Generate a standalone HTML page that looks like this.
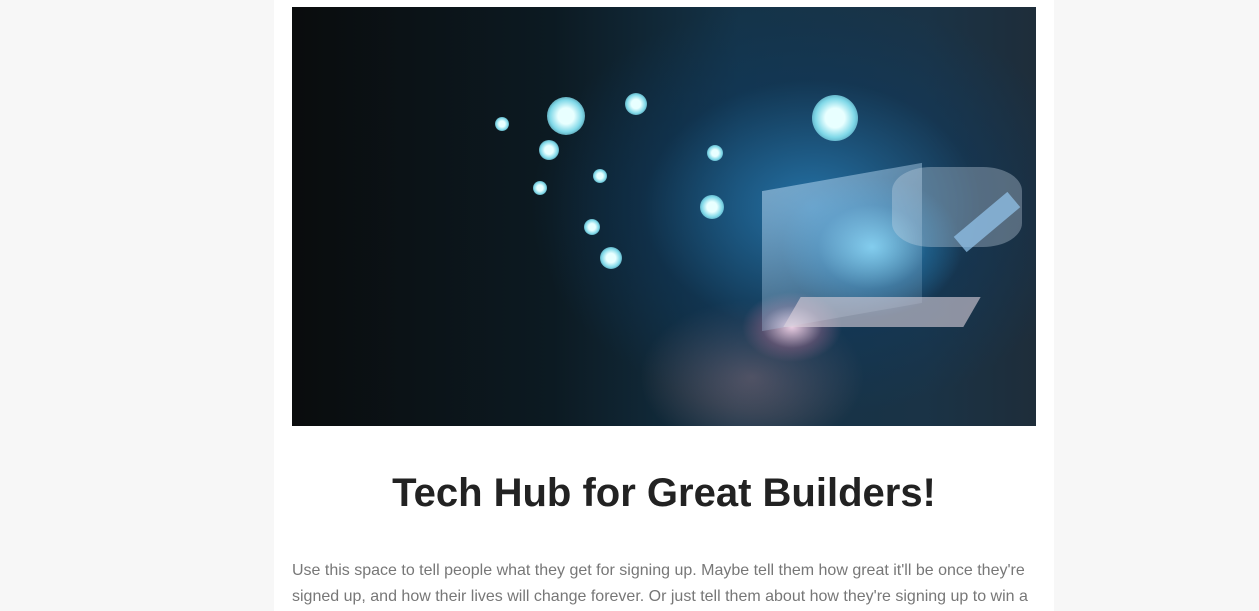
<!DOCTYPE html>
<html><head><style>
body{margin:0;background:#f7f7f7;width:1259px;height:611px;overflow:hidden;font-family:"Liberation Sans",Arial,sans-serif}
.panel{position:absolute;left:274px;top:0;width:780px;height:611px;background:#fff}
.img{position:absolute;left:18px;top:7px;width:744px;height:419px;overflow:hidden;
background:
radial-gradient(ellipse 50px 35px at 500px 320px,rgba(255,220,240,.9),rgba(200,120,160,.3) 60%,transparent),
radial-gradient(ellipse 90px 70px at 580px 240px,rgba(120,220,255,.85),rgba(40,140,200,.35) 60%,transparent),
radial-gradient(ellipse 280px 210px at 520px 200px,rgba(40,130,190,.8),rgba(15,60,100,.4) 60%,transparent),
radial-gradient(ellipse 160px 110px at 460px 370px,rgba(140,110,120,.6),transparent 70%),
linear-gradient(90deg,#0a0c0d 0%,#0c1a22 35%,#143348 60%,#1a3346 85%,#1e2d3a 100%)}
.dot{position:absolute;border-radius:50%;background:radial-gradient(circle,#e8ffff 30%,#7fd8e8 60%,rgba(80,180,210,.2));}
h1{position:absolute;left:0;width:780px;top:470px;margin:0;text-align:center;font-size:40px;font-weight:bold;color:#222;line-height:46px}
p{position:absolute;left:18px;top:558px;width:744px;margin:0;font-size:16px;line-height:26px;color:#777}
</style></head><body>
<div class="panel">
<div class="img">
<div class="dot" style="left:255px;top:90px;width:38px;height:38px"></div>
<div class="dot" style="left:520px;top:88px;width:46px;height:46px"></div>
<div class="dot" style="left:203px;top:110px;width:14px;height:14px"></div>
<div class="dot" style="left:247px;top:133px;width:20px;height:20px"></div>
<div class="dot" style="left:333px;top:86px;width:22px;height:22px"></div>
<div class="dot" style="left:241px;top:174px;width:14px;height:14px"></div>
<div class="dot" style="left:301px;top:162px;width:14px;height:14px"></div>
<div class="dot" style="left:408px;top:188px;width:24px;height:24px"></div>
<div class="dot" style="left:292px;top:212px;width:16px;height:16px"></div>
<div class="dot" style="left:308px;top:240px;width:22px;height:22px"></div>
<div class="dot" style="left:415px;top:138px;width:16px;height:16px"></div>
<div style="position:absolute;left:470px;top:170px;width:160px;height:140px;transform:skewY(-10deg);background:linear-gradient(160deg,rgba(200,230,255,.5),rgba(150,190,220,.2))"></div>
<div style="position:absolute;left:500px;top:290px;width:180px;height:30px;transform:skewX(-30deg);background:rgba(220,210,220,.6)"></div>
<div style="position:absolute;left:600px;top:160px;width:130px;height:80px;background:rgba(200,215,230,.35);border-radius:30%"></div>
<div style="position:absolute;left:660px;top:205px;width:70px;height:20px;transform:rotate(-40deg);background:rgba(150,200,240,.7)"></div>
</div>
<h1>Tech Hub for Great Builders!</h1>
<p>Use this space to tell people what they get for signing up. Maybe tell them how great it'll be once they're signed up, and how their lives will change forever. Or just tell them about how they're signing up to win a</p>
</div>
</body></html>
